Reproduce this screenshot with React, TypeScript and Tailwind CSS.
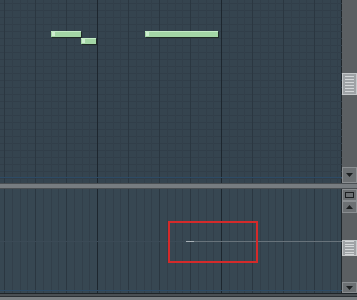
import React from "react";

const BEATS = [4, 35, 66, 128, 159, 190, 252, 283, 314];
const BARS = [97, 221];
const STEPS = Array.from({ length: 44 }, (_, i) => 4 + i * 7.75);

type Note = { x: number; y: number; w: number };

const NOTES: Note[] = [
  { x: 51, y: 31, w: 30 },
  { x: 81, y: 38, w: 15 },
  { x: 145, y: 31, w: 73 },
];

function GridLines({ height, rows }: { height: number; rows: boolean }) {
  return (
    <>
      {rows &&
        Array.from({ length: 27 }, (_, i) => (
          <line key={`r${i}`} x1={0} x2={342} y1={3.5 + i * 7} y2={3.5 + i * 7} stroke="#313e49" strokeWidth={1} />
        ))}
      {STEPS.map((x, i) => (
        <line key={`s${i}`} x1={Math.round(x) + 0.5} x2={Math.round(x) + 0.5} y1={0} y2={height} stroke="#323f4a" strokeWidth={1} />
      ))}
      {BEATS.map((x) => (
        <line key={`b${x}`} x1={x + 0.5} x2={x + 0.5} y1={0} y2={height} stroke="#2b3741" strokeWidth={1} />
      ))}
      {BARS.map((x) => (
        <line key={`B${x}`} x1={x + 0.5} x2={x + 0.5} y1={0} y2={height} stroke="#1d262e" strokeWidth={1} />
      ))}
    </>
  );
}

function ScrollButton({ dir }: { dir: "up" | "down" }) {
  return (
    <div className="flex h-full w-full items-center justify-center border border-[#8a8e91] bg-[#6c7073]">
      <svg width="7" height="4" viewBox="0 0 7 4">
        {dir === "down" ? <path d="M0 0h7L3.5 4z" fill="#1c1f21" /> : <path d="M0 4h7L3.5 0z" fill="#1c1f21" />}
      </svg>
    </div>
  );
}

function Thumb() {
  return (
    <div className="flex h-full w-full flex-col justify-center gap-[2px] border border-[#c4c7c9] bg-[#9fa3a6] px-[2px]">
      {Array.from({ length: 6 }, (_, i) => (
        <div key={i} className="h-px bg-[#d4d7d9]" />
      ))}
    </div>
  );
}

export default function App() {
  return (
    <div className="flex h-[300px] w-[357px] flex-col overflow-hidden bg-[#34424e] font-['Liberation_Sans',sans-serif]">
      {/* note grid */}
      <div className="flex h-[183px]">
        <div className="w-[342px] border-r border-[#1f262b] bg-[#35444f]">
          <svg width="342" height="183" className="block">
            <GridLines height={183} rows />
            <line x1={0} x2={342} y1={177.5} y2={177.5} stroke="#2d4b66" strokeWidth={1} />
            {NOTES.map((n, i) => (
              <g key={i}>
                <rect x={n.x + 1} y={n.y + 1} width={n.w} height={6} fill="#1f2b27" />
                <rect x={n.x} y={n.y} width={n.w} height={6} fill="#a3d6a6" />
                <rect x={n.x} y={n.y} width={n.w} height={1} fill="#c4ecc6" />
                <rect x={n.x + 1} y={n.y + 1} width={3} height={4} fill="#cdeecf" />
              </g>
            ))}
          </svg>
        </div>
        <div className="flex w-[15px] flex-col bg-[#5b5f62]">
          <div className="h-[73px]" />
          <div className="h-[22px]">
            <Thumb />
          </div>
          <div className="flex-1" />
          <div className="h-[16px]">
            <ScrollButton dir="down" />
          </div>
        </div>
      </div>

      {/* divider */}
      <div className="h-[6px] border-y border-[#4a4f53] bg-[#777c80]" />

      {/* event pane */}
      <div className="flex h-[104px]">
        <div className="relative w-[342px] border-r border-[#1f262b] bg-[#374752]">
          <svg width="342" height="104" className="block">
            <GridLines height={104} rows={false} />
            <line x1={0} x2={342} y1={52.5} y2={52.5} stroke="#3b4a56" strokeWidth={1} />
            <line x1={186} x2={342} y1={52.5} y2={52.5} stroke="#68737b" strokeWidth={1} />
            <line x1={186} x2={194} y1={52.5} y2={52.5} stroke="#a9b1b7" strokeWidth={1} />
            <line x1={0} x2={342} y1={101.5} y2={101.5} stroke="#2d4b66" strokeWidth={1} />
          </svg>
          <div className="absolute left-[168px] top-[32px] h-[42px] w-[90px] border-2 border-[#d42a2a]" />
        </div>
        <div className="flex w-[15px] flex-col bg-[#5b5f62]">
          <div className="flex h-[12px] items-center justify-center border border-[#8a8e91] bg-[#6c7073]">
            <div className="h-[6px] w-[9px] border border-[#1c1f21]" />
          </div>
          <div className="h-[12px]">
            <ScrollButton dir="up" />
          </div>
          <div className="h-[27px]" />
          <div className="h-[16px]">
            <Thumb />
          </div>
          <div className="flex-1" />
          <div className="h-[11px]">
            <ScrollButton dir="down" />
          </div>
        </div>
      </div>

      {/* bottom edge */}
      <div className="h-px bg-[#1f2529]" />
      <div className="h-[2px] bg-[#4b5054]" />
      <div className="flex-1 border-t border-[#2a2f33] bg-[#7a7f82]" />
    </div>
  );
}
